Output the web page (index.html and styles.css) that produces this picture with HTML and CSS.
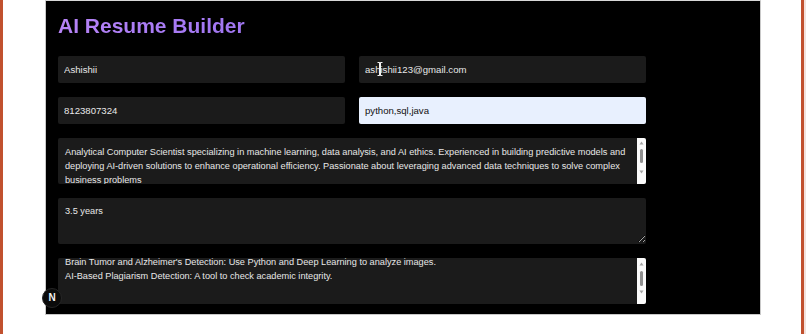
FILE: index.html
```html
<!DOCTYPE html>
<html lang="en">
<head>
<meta charset="utf-8">
<title>AI Resume Builder</title>
<link rel="stylesheet" href="styles.css">
</head>
<body>
<div class="frame">
  <div class="edge edge-left"></div>
  <main class="panel">
    <h1 class="title">AI Resume Builder</h1>
    <form class="form">
      <input class="field" type="text" value="Ashishii">
      <div class="field-wrap">
        <input class="field" type="email" value="ashishii123@gmail.com">
        <svg class="ibeam" width="6" height="14" viewBox="0 0 6 14"><path d="M0.5 0.5h2v13h-2M5.5 0.5h-2v13h2M2.5 0.5v13M3.5 0.5v13" fill="none" stroke="#f2f2f2" stroke-width="1"/></svg>
      </div>
      <input class="field" type="tel" value="8123807324">
      <input class="field field-autofill" type="text" value="python,sql,java">
      <div class="area-wrap">
        <textarea class="area area-summary">Analytical Computer Scientist specializing in machine learning, data analysis, and AI ethics. Experienced in building predictive models and deploying AI-driven solutions to enhance operational efficiency. Passionate about leveraging advanced data techniques to solve complex business problems</textarea>
        <svg class="scrollbar" width="9" height="46" viewBox="0 0 9 46"><rect width="9" height="46" fill="#fbfbfb"/><path d="M4.5 3.5L6.5 6.5H2.5Z" fill="#a3a3a3"/><rect x="3" y="11" width="3" height="14" rx="1.5" fill="#8f8f8f"/><path d="M2.5 32.5H6.5L4.5 35.5Z" fill="#a3a3a3"/></svg>
      </div>
      <div class="area-wrap">
        <textarea class="area area-exp">3.5 years</textarea>
      </div>
      <div class="area-wrap area-wrap-scrolled">
        <textarea class="area area-projects">Brain Tumor and Alzheimer's Detection: Use Python and Deep Learning to analyze images.
AI-Based Plagiarism Detection: A tool to check academic integrity.


</textarea>
        <svg class="scrollbar" width="9" height="46" viewBox="0 0 9 46"><rect width="9" height="46" fill="#fbfbfb"/><path d="M4.5 4.5L6.5 7.5H2.5Z" fill="#a3a3a3"/><rect x="3" y="13" width="3" height="15" rx="1.5" fill="#8f8f8f"/><path d="M2.5 32.5H6.5L4.5 35.5Z" fill="#a3a3a3"/></svg>
      </div>
    </form>
  </main>
  <div class="gutter"></div>
  <div class="edge edge-right"></div>
  <div class="edge-tail"></div>
</div>
<div class="dev-badge">N</div>
</body>
</html>
```

FILE: styles.css
```css
* { box-sizing: border-box; }

html, body {
  margin: 0;
  padding: 0;
  background: #ffffff;
  font-family: "Liberation Sans", Arial, sans-serif;
}

.frame {
  display: flex;
  height: 334px;
  align-items: flex-start;
}

.edge {
  width: 3px;
  height: 334px;
  background: #c1512f;
  flex: none;
}

.edge-tail {
  width: 2px;
  height: 334px;
  background: #f3e1db;
  flex: none;
}

.panel {
  flex: none;
  margin-left: 42px;
  width: 716px;
  height: 315px;
  background: #000000;
  border: 1px solid #c9c9c9;
  border-top-color: #d8d8d8;
  padding: 12px 0 0 12px;
  overflow: hidden;
}

.gutter {
  flex: none;
  width: 40px;
}

.title {
  margin: 0 0 18px 0;
  font-family: "Liberation Sans", Arial, sans-serif;
  font-size: 21px;
  line-height: 25px;
  font-weight: bold;
  background: linear-gradient(90deg, #b884f7 0%, #aa7cf5 50%, #a076f1 100%);
  -webkit-background-clip: text;
  background-clip: text;
  color: transparent;
  display: inline-block;
}

.form {
  display: grid;
  grid-template-columns: 287px 287px;
  column-gap: 14px;
  row-gap: 14px;
  width: 588px;
}

.field-wrap {
  position: relative;
}

.field {
  display: block;
  width: 100%;
  height: 27px;
  border: none;
  border-radius: 2px;
  background: #1b1b1b;
  color: #e8e8e8;
  font-family: "Liberation Sans", Arial, sans-serif;
  font-size: 9.6px;
  padding: 0 6px;
  outline: none;
}

.field-autofill {
  background: #e8f0fe;
  color: #111111;
}

.ibeam {
  position: absolute;
  left: 18px;
  top: 6px;
}

.area-wrap {
  grid-column: 1 / span 2;
  position: relative;
  height: 46px;
  border-radius: 2px;
  background: #1b1b1b;
  overflow: hidden;
}

.area {
  display: block;
  width: 100%;
  height: 46px;
  border: none;
  border-radius: 2px;
  background: transparent;
  color: #e8e8e8;
  font-family: "Liberation Sans", Arial, sans-serif;
  font-size: 9.2px;
  line-height: 14px;
  padding: 7px 14px 0 7px;
  resize: none;
  overflow: hidden;
  outline: none;
}

.area-exp {
  height: 45px;
  padding-top: 6px;
  resize: vertical;
  overflow: auto;
}

.area-projects {
  height: 49px;
  margin-top: -3px;
  padding-top: 0;
}

.scrollbar {
  position: absolute;
  right: 0;
  top: 0;
}

.dev-badge {
  position: absolute;
  left: 42px;
  top: 288px;
  width: 20px;
  height: 20px;
  border-radius: 50%;
  background: #0b0b0b;
  border: 1px solid #262626;
  color: #f0f0f0;
  font-family: "Liberation Sans", Arial, sans-serif;
  font-size: 10px;
  font-weight: bold;
  line-height: 18px;
  text-align: center;
}
```
